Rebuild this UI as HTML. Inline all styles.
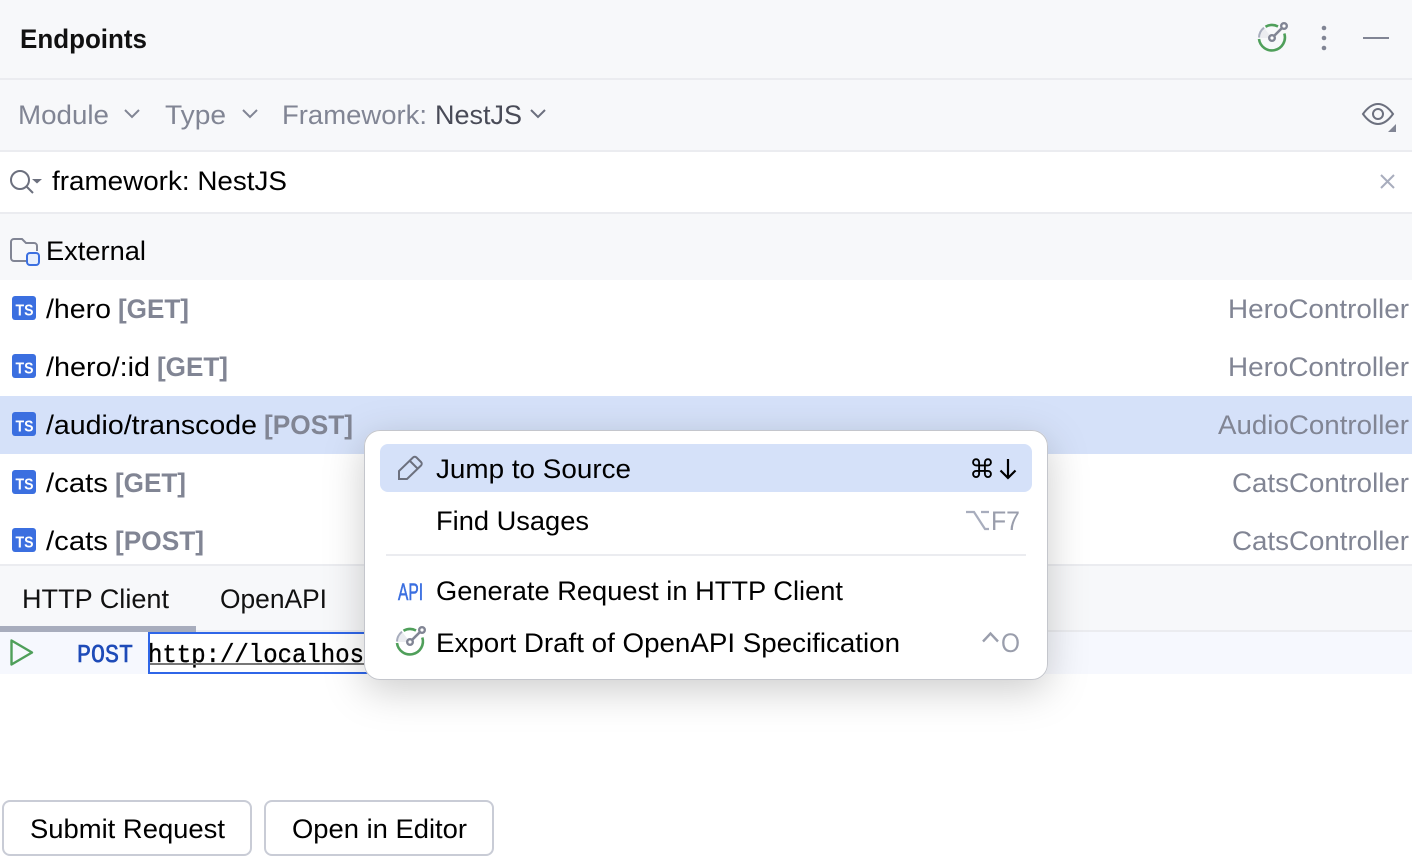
<!DOCTYPE html>
<html><head><meta charset="utf-8"><style>
html,body{margin:0;padding:0;background:#fff;overflow:hidden}
svg{display:block}
text{font-family:"Liberation Sans",sans-serif;font-size:27px;fill:#000}
.g{fill:#818594}.b{font-weight:700;fill:#818594}.r{fill:#818594}
.m{font-family:"Liberation Mono",monospace;font-size:26px}
</style></head><body>
<svg width="1412" height="860" viewBox="0 0 1412 860" xmlns="http://www.w3.org/2000/svg">
<defs>
<filter id="sh" x="-15%" y="-30%" width="130%" height="165%"><feDropShadow dx="0" dy="10" stdDeviation="20" flood-color="#000" flood-opacity=".2"/></filter>
<g id="ts"><rect width="24" height="24" rx="3" fill="#3b6fe0"/><text x="3.500" y="19.500" style="font-size:15.500px;font-weight:700;fill:#fff" textLength="18" lengthAdjust="spacingAndGlyphs">TS</text></g>
<g id="radar" fill="none"><path d="M3 18A13 13 0 0 1 8 7.700L16 18Z" fill="#ebecf0"/><path d="M3 17.500A13 13 0 0 1 8 7.700" stroke="#a8adbd" stroke-width="2"/><path d="M9.500 6.800A13 13 0 0 1 22 6.500" stroke="#4f9f5a" stroke-width="2.600"/><path d="M28.300 13.500A13 13 0 1 1 3 19" stroke="#4f9f5a" stroke-width="2.600"/><path d="M18 16L26 8" stroke="#818594" stroke-width="2.600"/><circle cx="16" cy="18" r="2.800" fill="#fff" stroke="#818594" stroke-width="2.400"/><circle cx="28" cy="6" r="2.800" fill="#fff" stroke="#818594" stroke-width="2.400"/></g>
</defs>

<rect width="1412" height="860" fill="#fff"/>
<rect width="1412" height="152" fill="#f7f8fa"/>
<rect y="78" width="1412" height="2" fill="#ebecf0"/>
<rect y="150" width="1412" height="2" fill="#ebecf0"/>
<rect y="212" width="1412" height="2" fill="#ebecf0"/>
<rect y="214" width="1412" height="66" fill="#f7f8fa"/>
<rect y="396" width="1412" height="58" fill="#d5e1f9"/>
<rect y="564" width="1412" height="2" fill="#ebecf0"/>
<rect y="566" width="1412" height="64" fill="#f7f8fa"/>
<rect y="630" width="1412" height="2" fill="#ebecf0"/>
<rect y="626" width="196" height="6" fill="#a8adbd"/>
<rect y="632" width="1412" height="42" fill="#f6f8fe"/>

<!-- header -->
<text x="20" y="48" textLength="127" lengthAdjust="spacingAndGlyphs" style="font-weight:700;fill:#111">Endpoints</text>
<use href="#radar" x="1256" y="20"/>
<circle cx="1324" cy="28" r="2.300" fill="#818594"/><circle cx="1324" cy="38" r="2.300" fill="#818594"/><circle cx="1324" cy="48" r="2.300" fill="#818594"/>
<rect x="1363" y="37" width="26" height="2" fill="#818594"/>

<!-- toolbar -->
<text class="g" x="18" y="124" textLength="91" lengthAdjust="spacingAndGlyphs">Module</text>
<path d="M125 110l7 7 7-7" fill="none" stroke="#818594" stroke-width="2"/>
<text class="g" x="165" y="124" textLength="61" lengthAdjust="spacingAndGlyphs">Type</text>
<path d="M243 110l7 7 7-7" fill="none" stroke="#818594" stroke-width="2"/>
<text class="g" x="282" y="124" textLength="145" lengthAdjust="spacingAndGlyphs">Framework:</text>
<text x="435" y="124" textLength="87" lengthAdjust="spacingAndGlyphs" style="fill:#494b57">NestJS</text>
<path d="M531 110l7 7 7-7" fill="none" stroke="#6c707e" stroke-width="2"/>
<path d="M1363 114C1368 107 1373 104 1378 104S1388 107 1393 114C1388 121 1383 124 1378 124S1368 121 1363 114Z" fill="none" stroke="#6c707e" stroke-width="2"/>
<circle cx="1378" cy="114" r="5" fill="none" stroke="#6c707e" stroke-width="2"/>
<path d="M1396 124v8h-8z" fill="#818594"/>

<!-- search -->
<circle cx="20" cy="180" r="9" fill="none" stroke="#6c707e" stroke-width="2"/>
<path d="M26.500 186.500L33 193" stroke="#6c707e" stroke-width="2"/>
<path d="M32 179h10l-5 4.500z" fill="#6c707e"/>
<text x="52" y="190" textLength="235" lengthAdjust="spacingAndGlyphs">framework: NestJS</text>
<path d="M1381 175l13 13M1394 175l-13 13" stroke="#a8adbd" stroke-width="2"/>

<!-- External -->
<path d="M11 258V242a3 3 0 0 1 3-3h8l4 4h8a3 3 0 0 1 3 3v5M26 261H14a3 3 0 0 1-3-3" fill="none" stroke="#818594" stroke-width="2"/>
<rect x="27" y="253" width="12" height="12" rx="3" fill="#e7effd" stroke="#3b6fe0" stroke-width="2"/>
<text x="46" y="260" textLength="100" lengthAdjust="spacingAndGlyphs">External</text>

<!-- rows -->
<use href="#ts" x="12" y="296"/>
<text x="46" y="318" textLength="65" lengthAdjust="spacingAndGlyphs">/hero</text>
<text class="b" x="118" y="318" textLength="71" lengthAdjust="spacingAndGlyphs">[GET]</text>
<text class="r" x="1228" y="318" textLength="181" lengthAdjust="spacingAndGlyphs">HeroController</text>

<use href="#ts" x="12" y="354"/>
<text x="46" y="376" textLength="104" lengthAdjust="spacingAndGlyphs">/hero/:id</text>
<text class="b" x="157" y="376" textLength="71" lengthAdjust="spacingAndGlyphs">[GET]</text>
<text class="r" x="1228" y="376" textLength="181" lengthAdjust="spacingAndGlyphs">HeroController</text>

<use href="#ts" x="12" y="412"/>
<text x="46" y="434" textLength="211" lengthAdjust="spacingAndGlyphs">/audio/transcode</text>
<text class="b" x="264" y="434" textLength="89" lengthAdjust="spacingAndGlyphs">[POST]</text>
<text class="r" x="1218" y="434" textLength="191" lengthAdjust="spacingAndGlyphs">AudioController</text>

<use href="#ts" x="12" y="470"/>
<text x="46" y="492" textLength="62" lengthAdjust="spacingAndGlyphs">/cats</text>
<text class="b" x="115" y="492" textLength="71" lengthAdjust="spacingAndGlyphs">[GET]</text>
<text class="r" x="1232" y="492" textLength="177" lengthAdjust="spacingAndGlyphs">CatsController</text>

<use href="#ts" x="12" y="528"/>
<text x="46" y="550" textLength="62" lengthAdjust="spacingAndGlyphs">/cats</text>
<text class="b" x="115" y="550" textLength="89" lengthAdjust="spacingAndGlyphs">[POST]</text>
<text class="r" x="1232" y="550" textLength="177" lengthAdjust="spacingAndGlyphs">CatsController</text>

<!-- tabs -->
<text x="22" y="608" textLength="147" lengthAdjust="spacingAndGlyphs" style="fill:#111">HTTP Client</text>
<text x="220" y="608" textLength="107" lengthAdjust="spacingAndGlyphs" style="fill:#111">OpenAPI</text>

<!-- request line -->
<path d="M11.500 640.500L32 652.500 11.500 664.500Z" fill="none" stroke="#4f9f5a" stroke-width="2.400" stroke-linejoin="round"/>
<text class="m" x="77" y="662" textLength="56" lengthAdjust="spacingAndGlyphs" style="fill:#1e4bb8;stroke:#1e4bb8;stroke-width:.6px">POST</text>
<rect x="149" y="633" width="240" height="40" fill="#fff" stroke="#2f66e8" stroke-width="2"/>
<text class="m" x="148" y="662" textLength="216" lengthAdjust="spacingAndGlyphs" style="stroke:#000;stroke-width:.35px">http://localhos</text>
<rect x="150" y="663" width="216" height="2" fill="#777"/>

<!-- buttons -->
<rect x="3" y="801" width="248" height="54" rx="7" fill="#fff" stroke="#c9ccd6" stroke-width="2"/>
<text x="30" y="838" textLength="195" lengthAdjust="spacingAndGlyphs">Submit Request</text>
<rect x="265" y="801" width="228" height="54" rx="7" fill="#fff" stroke="#c9ccd6" stroke-width="2"/>
<text x="292" y="838" textLength="175" lengthAdjust="spacingAndGlyphs">Open in Editor</text>

<!-- popup -->
<rect x="364" y="430" width="684" height="250" rx="16" fill="#fff" filter="url(#sh)"/>
<rect x="364.500" y="430.500" width="683" height="249" rx="15.500" fill="#fff" stroke="#c4c6cc"/>
<rect x="380" y="444" width="652" height="48" rx="8" fill="#d5e1f9"/>
<path d="M399 479V471L413 457.500a2.500 2.500 0 0 1 3.500 0L421 462a2.500 2.500 0 0 1 0 3.500L407 479ZM410 461l7.500 7.500" fill="none" stroke="#6c707e" stroke-width="2"/>
<text x="436" y="478" textLength="195" lengthAdjust="spacingAndGlyphs">Jump to Source</text>
<text x="969" y="478" style="font-family:'DejaVu Sans',sans-serif;font-size:26px" textLength="26" lengthAdjust="spacingAndGlyphs">⌘</text>
<path d="M1008 459v19M1000.500 470.500l7.500 7.500 7.500-7.500" fill="none" stroke="#000" stroke-width="2.200"/>
<text x="436" y="530" textLength="153" lengthAdjust="spacingAndGlyphs">Find Usages</text>
<path d="M966 512h8L985 529h4M981 512h8" fill="none" stroke="#a8adbd" stroke-width="2.200"/>
<text x="991" y="530" textLength="29" lengthAdjust="spacingAndGlyphs" style="fill:#9a9eac">F7</text>
<rect x="386" y="554" width="640" height="2" fill="#ebecf0"/>
<text x="398" y="600" textLength="25" lengthAdjust="spacingAndGlyphs" style="font-size:24px;fill:#3b6fe0;stroke:#3b6fe0;stroke-width:.6px">API</text>
<text x="436" y="600" textLength="407" lengthAdjust="spacingAndGlyphs">Generate Request in HTTP Client</text>
<use href="#radar" x="394" y="624"/>
<text x="436" y="652" textLength="464" lengthAdjust="spacingAndGlyphs">Export Draft of OpenAPI Specification</text>
<path d="M983 641.500l7.500-8 7.500 8" fill="none" stroke="#9a9eac" stroke-width="2.400"/>
<text x="1001" y="652" textLength="19" lengthAdjust="spacingAndGlyphs" style="fill:#9a9eac">O</text>
</svg>
</body></html>
